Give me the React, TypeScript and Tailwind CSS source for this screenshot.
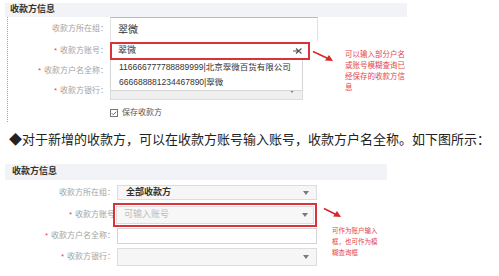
import { Check } from 'lucide-react'

const FONT = "font-['Liberation_Sans','Noto_Sans_CJK_SC',sans-serif]"

function Caret() {
  return (
    <svg width="6" height="4" viewBox="0 0 6 4" className="shrink-0" aria-hidden>
      <path d="M0 0 L6 0 L3 4 Z" fill="#7a7a7a" />
    </svg>
  )
}

function Label({ text, required, width }: { text: string; required?: boolean; width: string }) {
  return (
    <div className={`${width} shrink-0 text-right text-[8px] leading-none text-[#a3a3a3]`}>
      {required && <span className="mr-[3px] text-[#e2474b]">*</span>}
      {text}
    </div>
  )
}

function RedArrow({ w, h }: { w: number; h: number }) {
  return (
    <svg width={w} height={h} viewBox={`0 0 ${w} ${h}`} className="shrink-0" aria-hidden>
      <line x1="1" y1="1.5" x2={w - 5} y2={h - 3.5} stroke="#d9262c" strokeWidth="1.6" />
      <path d={`M${w} ${h - 1} L${w - 8} ${h - 1.5} L${w - 4} ${h - 7} Z`} fill="#d9262c" />
    </svg>
  )
}

export default function App() {
  return (
    <div className={`${FONT} h-[276px] w-[499px] overflow-hidden bg-white`}>
      {/* 上半部分：模糊查询 */}
      <section className="pl-[5px] pt-[3px]">
        <div className="flex h-[14px] w-[402px] items-center bg-[#f1f3f6] pl-[5px] text-[9px] font-bold text-[#333]">
          收款方信息
        </div>
        <div className="ml-[2px] flex border-l border-dotted border-[#8ea3c6] pb-[4px]">
          <div className="flex w-[310px] flex-col">
            <div className="flex h-[24px] items-center gap-[2px]">
              <Label text="收款方所在组：" width="w-[100px]" />
              <div className="flex h-[24px] w-[208px] items-center border-x border-t border-[#e2e2e2] border-t-[#f0b44c] bg-white pl-[7px] text-[10px] text-[#333]">
                翠微
              </div>
            </div>

            <div className="mt-[1px] flex h-[18px] items-center gap-[2px]">
              <Label text="收款方账号：" required width="w-[100px]" />
              <div className="relative">
                <div className="flex h-[18px] w-[200px] items-center justify-between border-2 border-[#d8323a] bg-white pl-[6px] pr-[6px] text-[9px] text-[#333]">
                  <span>翠微</span>
                  <svg width="9" height="6" viewBox="0 0 9 6" aria-hidden>
                    <path d="M3 0.5 L8.5 5.5 M8.5 0.5 L3 5.5 M0 3 L5 3" stroke="#555" strokeWidth="1.2" />
                  </svg>
                </div>
                <div className="absolute left-0 top-full z-10 flex w-[193px] flex-col border-x border-b border-[#d6d6d6] bg-white text-[8.5px] text-[#333]">
                  <div className="flex h-[15px] items-center whitespace-nowrap pl-[8px]">
                    116666777788889999|北京翠微百货有限公司
                  </div>
                  <div className="flex h-[15px] items-center whitespace-nowrap pl-[8px]">
                    666688881234467890|翠微
                  </div>
                </div>
              </div>
            </div>

            <div className="mt-[2px] flex h-[18px] items-center gap-[2px]">
              <Label text="收款方户名全称：" required width="w-[100px]" />
              <div className="h-[18px] w-[193px] border border-[#d6d6d6] bg-white" />
            </div>

            <div className="mt-[2px] flex h-[18px] items-center gap-[2px]">
              <Label text="收款方银行：" required width="w-[100px]" />
              <div className="flex h-[18px] w-[193px] items-center justify-end border border-[#dcdcdc] bg-[#efefef] pr-[7px]">
                <Caret />
              </div>
            </div>

            <div className="mt-[8px] flex h-[10px] items-center gap-[4px] pl-[102px]">
              <div className="flex h-[8px] w-[8px] items-center justify-center border border-[#777] bg-white">
                <Check className="h-[7px] w-[7px] text-[#333]" strokeWidth={3} />
              </div>
              <span className="text-[8px] text-[#555]">保存收款方</span>
            </div>
          </div>

          <div className="-ml-[6px] mt-[33px] flex items-start">
            <RedArrow w={21} h={12} />
            <div className="ml-[12px] -mt-[1px] flex flex-col text-[7.5px] leading-[11px] text-[#e2474b]">
              <span>可以输入部分户名</span>
              <span>或账号模糊查询已</span>
              <span>经保存的收款方信</span>
              <span>息</span>
            </div>
          </div>
        </div>
      </section>

      <p className="mt-[9px] h-[18px] whitespace-nowrap pl-[9px] text-[13px] leading-[18px] text-[#222]">
        ◆对于新增的收款方，可以在收款方账号输入账号，收款方户名全称。如下图所示：
      </p>

      {/* 下半部分：新增收款方 */}
      <section className="mt-[15px] pl-[5px]">
        <div className="flex h-[16px] w-[382px] items-center bg-[#f1f3f6] pl-[7px] text-[9px] font-bold text-[#333]">
          收款方信息
        </div>
        <div className="flex">
          <div className="flex w-[312px] flex-col">
            <div className="mt-[5px] flex h-[15px] items-center gap-[2px]">
              <Label text="收款方所在组：" width="w-[110px]" />
              <div className="flex h-[15px] w-[200px] items-center justify-between border border-[#dcdcdc] bg-[#f6f6f6] pl-[8px] pr-[7px] text-[9px] font-semibold text-[#333]">
                <span>全部收款方</span>
                <Caret />
              </div>
            </div>

            <div className="mt-[3px] flex h-[24px] items-center gap-[2px]">
              <Label text="收款方账号" required width="w-[110px]" />
              <div className="-ml-[4px] h-[24px] w-[208px] border-2 border-[#d8323a] p-[1px]">
                <div className="flex h-[18px] items-center justify-between border border-[#dcdcdc] bg-[#f7f7f7] pl-[7px] pr-[5px] text-[9px] text-[#bdbdbd]">
                  <span>可输入账号</span>
                  <Caret />
                </div>
              </div>
            </div>

            <div className="mt-[1px] flex h-[16px] items-center gap-[2px]">
              <Label text="收款方户名全称：" required width="w-[110px]" />
              <div className="h-[16px] w-[200px] border border-[#d4d4d4] bg-white" />
            </div>

            <div className="mt-[4px] flex h-[18px] items-center gap-[2px]">
              <Label text="收款方银行：" required width="w-[110px]" />
              <div className="flex h-[18px] w-[200px] items-center justify-end border border-[#dcdcdc] bg-[#f6f6f6] pr-[7px]">
                <Caret />
              </div>
            </div>
          </div>

          <div className="ml-[6px] mt-[27px] flex flex-col">
            <RedArrow w={18} h={11} />
            <div className="ml-[9px] mt-[7px] flex flex-col whitespace-nowrap text-[6.5px] leading-[11px] text-[#e2474b]">
              <span>可作为账户输入</span>
              <span>框，也可作为模</span>
              <span>糊查询框</span>
            </div>
          </div>
        </div>
      </section>
    </div>
  )
}
